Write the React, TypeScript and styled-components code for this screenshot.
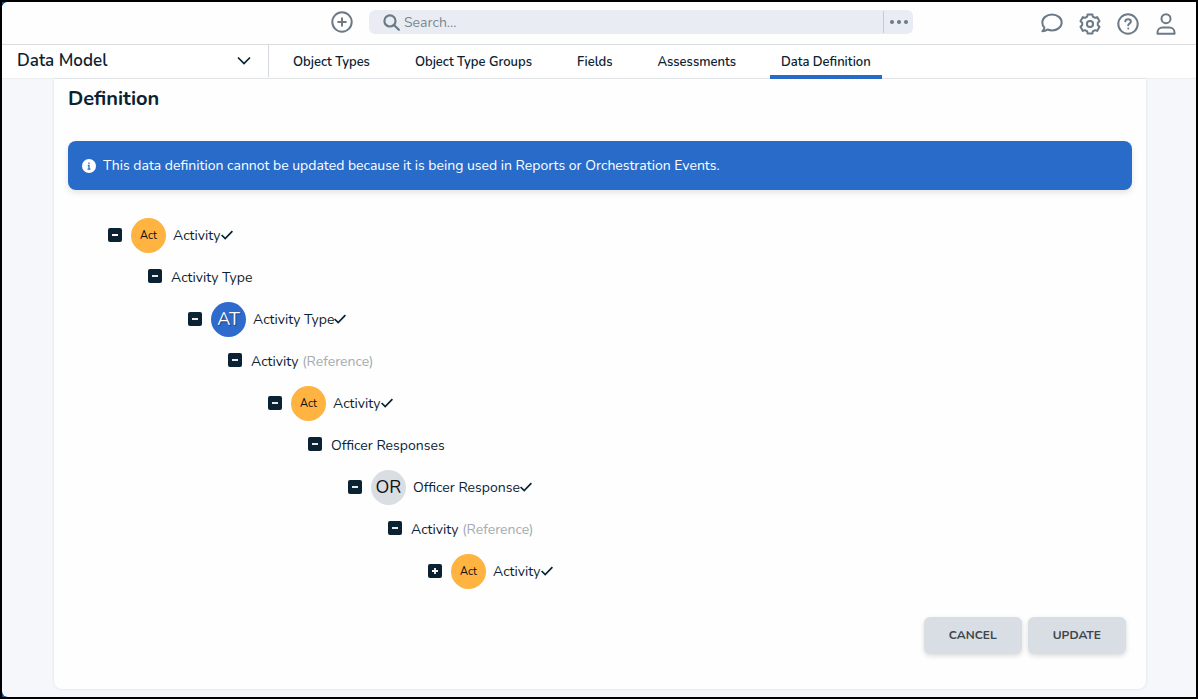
import React, { useState } from "react";
import styled, { createGlobalStyle, css } from "styled-components";

const GlobalStyle = createGlobalStyle`
  *, *::before, *::after { box-sizing: border-box; }
  body {
    margin: 0;
    background: #000;
    color: #0a2231;
    font-family: Nunito, Lato, "Open Sans", sans-serif;
    font-size: 14px;
  }
  button, input { font: inherit; color: inherit; }
  button { padding: 0; border: 0; background: none; cursor: pointer; }
`;

const Frame = styled.div`
  display: flex;
  min-height: 100vh;
  border: 2px solid #000;
  background: #145089;
`;

const Page = styled.div`
  display: flex;
  flex: 1;
  flex-direction: column;
  min-width: 0;
  border-radius: 6px 0 0 6px;
  background: #f5f7fb;
  overflow: hidden;
`;

const TopBar = styled.header`
  display: grid;
  grid-template-columns: 1fr 583px 1fr;
  align-items: center;
  height: 43px;
  padding: 0 19px 0 64px;
  border-bottom: 1px solid #d9dcdf;
  background: #fefefe;
  color: #6b7a86;
`;

const TopCenter = styled.div`
  display: flex;
  grid-column: 2;
  align-items: center;
  justify-content: flex-end;
  gap: 16px;
  padding-bottom: 2px;
`;

const IconButton = styled.button`
  display: flex;
  align-items: center;
  justify-content: center;
  width: 23px;
  height: 24px;
`;

const SearchBox = styled.form`
  display: flex;
  flex: 1;
  align-items: center;
  height: 24px;
  padding-left: 14px;
  border-radius: 6px;
  background: #e9edf3;
`;

const SearchInput = styled.input`
  flex: 1;
  min-width: 0;
  height: 24px;
  padding: 0 4px;
  border: 0;
  outline: 0;
  background: transparent;
  font-size: 14px;
  &::placeholder { color: #7a8791; opacity: 1; }
`;

const MoreButton = styled.button`
  display: flex;
  align-items: center;
  justify-content: center;
  width: 30px;
  height: 22px;
  border-left: 1px solid #c6cbd0;
`;

const TopActions = styled.div`
  display: flex;
  justify-content: flex-end;
  gap: 15px;
  padding-top: 2px;
`;

const NavBar = styled.nav`
  display: flex;
  height: 34px;
  border-bottom: 1px solid #eceeef;
  background: #fff;
`;

const SectionButton = styled.button`
  display: flex;
  align-items: center;
  justify-content: space-between;
  width: 267px;
  height: 32px;
  padding: 0 17px 2px 15px;
  border-right: 1px solid #d5d9dd;
  font-size: 17px;
  font-weight: 600;
`;

const Tabs = styled.div`
  display: flex;
  gap: 23px;
  padding-left: 13px;
`;

const Tab = styled.a<{ $active?: boolean }>`
  display: flex;
  align-items: center;
  height: 34px;
  padding: 4px 11px 0;
  border-bottom: 4px solid ${(p) => (p.$active ? "#286bc9" : "transparent")};
  color: inherit;
  font-size: 13px;
  font-weight: 600;
  text-decoration: none;
  white-space: nowrap;
`;

const Main = styled.main`
  display: flex;
  flex: 1;
  padding: 0 50px 8px 52px;
`;

const Panel = styled.section`
  display: flex;
  flex: 1;
  flex-direction: column;
  min-width: 0;
  padding: 8px 14px 35px;
  border-radius: 0 0 8px 8px;
  background: #fefefe;
  box-shadow: 0 0 3px rgba(20, 50, 80, 0.12);
`;

const Title = styled.h1`
  margin: 0 0 30px;
  font-size: 20px;
  font-weight: 700;
  line-height: 24px;
`;

const Notice = styled.div`
  display: flex;
  align-items: center;
  gap: 7px;
  min-height: 49px;
  padding: 0 14px;
  border-radius: 8px;
  background: #286bc9;
  box-shadow: 0 3px 6px rgba(0, 0, 0, 0.1);
  color: #fff;
  font-size: 14px;
`;

const Tree = styled.ul`
  margin: 24px 0 0;
  padding: 0 0 0 40px;
  list-style: none;
`;

const Branch = styled.ul`
  margin: 0;
  padding: 0 0 0 40px;
  list-style: none;
`;

const Toggle = styled.button`
  display: flex;
  width: 14px;
  height: 14px;
`;

const Row = styled.div<{ $field?: boolean }>`
  display: flex;
  align-items: center;
  gap: ${(p) => (p.$field ? "9px" : "0")};
  height: 42px;

  ${Toggle} {
    margin-bottom: ${(p) => (p.$field ? "2px" : "0")};
  }
`;

const tones = {
  amber: css`background: #ffb340; color: #111;`,
  blue: css`background: #2f6bcc; color: #fff; text-shadow: 1px 1px 1px rgba(0, 0, 0, 0.4);`,
  grey: css`background: #dadee2; color: #111;`,
};

type Tone = keyof typeof tones;

const Badge = styled.span<{ $tone: Tone; $small: boolean }>`
  display: flex;
  align-items: center;
  justify-content: center;
  width: 35px;
  height: 35px;
  margin: 0 7px 0 9px;
  border-radius: 50%;
  font-size: ${(p) => (p.$small ? "11px" : "18px")};
  ${(p) => tones[p.$tone]}
`;

const Muted = styled.span`
  color: #a5abb0;
`;

const Actions = styled.div`
  display: flex;
  justify-content: flex-end;
  gap: 6px;
  margin-top: auto;
  padding: 25px 6px 0;
`;

const ActionButton = styled.button`
  min-width: 97px;
  height: 37px;
  padding: 0 25px 1px;
  border-radius: 6px;
  background: #d9dee4;
  box-shadow: 0 2px 5px rgba(0, 0, 0, 0.14);
  color: #3f454a;
  font-size: 12px;
  font-weight: 700;
`;

const Stroke = ({ size = 22, width = 2, children }: { size?: number; width?: number; children: React.ReactNode }) => (
  <svg width={size} height={size} viewBox="0 0 22 22" fill="none" stroke="currentColor" strokeWidth={width} strokeLinecap="round" strokeLinejoin="round" aria-hidden="true">
    {children}
  </svg>
);

// Six-toothed outline: each tooth is two outer points followed by two valley points.
const gearPoints = [0, 60, 120, 180, 240, 300]
  .flatMap((tooth) => [[-14, 9.9], [14, 9.9], [21, 7.9], [39, 7.9]].map(([offset, radius]) => {
    const angle = ((tooth + offset) * Math.PI) / 180;
    return `${(11 + radius * Math.sin(angle)).toFixed(2)},${(11 - radius * Math.cos(angle)).toFixed(2)}`;
  }))
  .join(" ");

const ToggleIcon = ({ open }: { open: boolean }) => (
  <svg width="14" height="14" viewBox="0 0 14 14" aria-hidden="true">
    <rect width="14" height="14" rx="2" fill="#0a2231" />
    <path d={open ? "M4 7h6" : "M4 7h6M7 4v6"} stroke="#fff" strokeWidth="1.8" />
  </svg>
);

const Check = () => (
  <svg width="12" height="10" viewBox="0 0 12 10" fill="none" stroke="#0a2231" strokeWidth="1.7" role="img" aria-label="Selected">
    <path d="M.6 5 4.200 8.500 11.400 1.200" />
  </svg>
);

interface Item {
  label: string;
  badge?: string;
  tone?: Tone;
  reference?: boolean;
  child?: Item;
}

const root: Item = {
  label: "Activity", badge: "Act", tone: "amber",
  child: {
    label: "Activity Type",
    child: {
      label: "Activity Type", badge: "AT", tone: "blue",
      child: {
        label: "Activity", reference: true,
        child: {
          label: "Activity", badge: "Act", tone: "amber",
          child: {
            label: "Officer Responses",
            child: {
              label: "Officer Response", badge: "OR", tone: "grey",
              child: {
                label: "Activity", reference: true,
                child: { label: "Activity", badge: "Act", tone: "amber" },
              },
            },
          },
        },
      },
    },
  },
};

function Node({ item }: { item: Item }) {
  const [open, setOpen] = useState(Boolean(item.child));
  return (
    <li>
      <Row $field={!item.badge}>
        <Toggle type="button" aria-expanded={open} aria-label={`Toggle ${item.label}`} onClick={() => setOpen(!open)}>
          <ToggleIcon open={open} />
        </Toggle>
        {item.badge && (
          <Badge $tone={item.tone ?? "grey"} $small={item.badge.length > 2}>{item.badge}</Badge>
        )}
        <span>
          {item.label}
          {item.reference && <Muted> (Reference)</Muted>}
        </span>
        {item.badge && <Check />}
      </Row>
      {open && item.child && (
        <Branch>
          <Node item={item.child} />
        </Branch>
      )}
    </li>
  );
}

const tabs = ["Object Types", "Object Type Groups", "Fields", "Assessments", "Data Definition"];

export default function App() {
  return (
    <>
      <GlobalStyle />
      <Frame>
        <Page>
          <TopBar>
            <TopCenter>
              <IconButton type="button" aria-label="Create">
                <Stroke><circle cx="11" cy="11" r="9.7" /><path d="M11 7.2v7.6M7.2 11h7.6" /></Stroke>
              </IconButton>
              <SearchBox role="search">
                <Stroke size={17} width={2.8}><circle cx="9" cy="9" r="7.2" /><path d="m14.5 14.5 6 6" /></Stroke>
                <SearchInput type="text" aria-label="Search" placeholder="Search..." />
                <MoreButton type="button" aria-label="Search options">
                  <svg width="18" height="4" viewBox="0 0 18 4" fill="currentColor" aria-hidden="true">
                    <circle cx="2" cy="2" r="2" /><circle cx="9" cy="2" r="2" /><circle cx="16" cy="2" r="2" />
                  </svg>
                </MoreButton>
              </SearchBox>
            </TopCenter>
            <TopActions>
              <IconButton type="button" aria-label="Messages">
                <Stroke><path d="M11 1.600c5.400 0 9.700 3.500 9.700 7.900s-4.300 7.900-9.700 7.900c-1.600 0-3.100-.3-4.500-.9-1.400 1.100-3.200 1.700-5.100 1.700 1-1 1.700-2.300 2-3.600C2 13.200 1.300 11.500 1.300 9.500c0-4.400 4.300-7.900 9.700-7.900z" /></Stroke>
              </IconButton>
              <IconButton type="button" aria-label="Settings">
                <Stroke>
                  <polygon points={gearPoints} />
                  <circle cx="11" cy="11" r="3.100" />
                </Stroke>
              </IconButton>
              <IconButton type="button" aria-label="Help">
                <Stroke><circle cx="11" cy="11" r="9.700" /><path d="M8.300 8.300c.2-1.300 1.200-2 2.700-2 1.700 0 2.900.9 2.900 2.300 0 2-2.700 2-2.700 3.700M11.200 15.500v.1" /></Stroke>
              </IconButton>
              <IconButton type="button" aria-label="Account">
                <Stroke><circle cx="11" cy="5.700" r="4.500" /><path d="M2.500 20.800v-1.300c0-2.900 2.200-5 5-5h7c2.800 0 5 2.100 5 5v1.300z" /></Stroke>
              </IconButton>
            </TopActions>
          </TopBar>
          <NavBar aria-label="Data model">
            <SectionButton type="button" aria-haspopup="menu">
              Data Model
              <svg width="14" height="9" viewBox="0 0 14 9" fill="none" stroke="currentColor" strokeWidth="1.700" aria-hidden="true"><path d="m1 1.500 6 6 6-6" /></svg>
            </SectionButton>
            <Tabs>
              {tabs.map((t) => (
                <Tab key={t} href="#" $active={t === "Data Definition"} aria-current={t === "Data Definition" ? "page" : undefined}>{t}</Tab>
              ))}
            </Tabs>
          </NavBar>
          <Main>
            <Panel>
              <Title>Definition</Title>
              <Notice role="status">
                <svg width="14" height="14" viewBox="0 0 14 14" aria-hidden="true">
                  <circle cx="7" cy="7" r="7" fill="#fff" />
                  <path d="M7 3.500v1.500M5.800 6.500H7v3.500M5.500 10.200h3" fill="none" stroke="#286bc9" strokeWidth="1.300" />
                </svg>
                This data definition cannot be updated because it is being used in Reports or Orchestration Events.
              </Notice>
              <Tree>
                <Node item={root} />
              </Tree>
              <Actions>
                <ActionButton type="button">CANCEL</ActionButton>
                <ActionButton type="button">UPDATE</ActionButton>
              </Actions>
            </Panel>
          </Main>
        </Page>
      </Frame>
    </>
  );
}
